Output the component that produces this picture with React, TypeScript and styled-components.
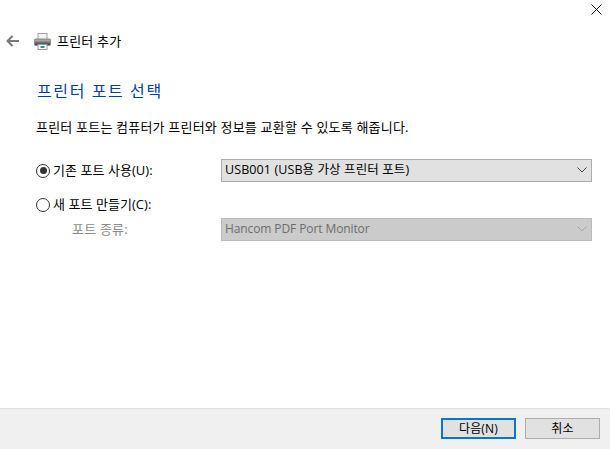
import React from "react";
import styled, { createGlobalStyle } from "styled-components";

const Global = createGlobalStyle`
  html, body {
    margin: 0;
    padding: 0;
    background: #fff;
    overflow: hidden;
  }
  body {
    font-family: "Open Sans", "Noto Sans CJK KR", sans-serif;
    font-size: 13px;
    letter-spacing: 0.2px;
    color: #000;
  }
`;

const Window = styled.div`
  width: 610px;
  height: 449px;
  display: flex;
  flex-direction: column;
`;

const TitleBar = styled.div`
  height: 21px;
  display: flex;
  justify-content: flex-end;
  padding: 4px 8px 0 0;
  box-sizing: border-box;
`;

const CloseButton = styled.div`
  width: 11px;
  height: 11px;
  display: flex;
`;

const NavBar = styled.div`
  height: 40px;
  display: flex;
  align-items: center;
  padding-left: 6px;
`;

const BackIcon = styled.div`
  width: 14px;
  height: 12px;
  display: flex;
  margin-right: 14px;
`;

const PrinterIcon = styled.div`
  width: 17px;
  height: 17px;
  display: flex;
  margin-right: 6px;
`;

const NavTitle = styled.span`
  line-height: 16px;
`;

const Content = styled.div`
  flex: 1;
  padding: 19px 18px 0 36px;
`;

const Heading = styled.h1`
  margin: 0 0 17px 1px;
  font-size: 16px;
  letter-spacing: 1.6px;
  line-height: 22px;
  font-weight: 400;
  color: #0040a8;
`;

const Description = styled.p`
  margin: 0 0 24px;
  line-height: 16px;
`;

const FormGrid = styled.div`
  display: grid;
  grid-template-columns: 185px 371px;
  grid-template-rows: 34px 25px 23px;
  align-items: start;
`;

const RadioLabel = styled.label`
  display: flex;
  align-items: center;
  height: 23px;
  gap: 3px;
  line-height: 14px;
  letter-spacing: 0.05px;
`;

const RadioCircle = styled.span<{ $checked?: boolean }>`
  flex: none;
  width: 14px;
  height: 14px;
  box-sizing: border-box;
  border: 1px solid #333;
  border-radius: 50%;
  background: #fff;
  display: flex;
  align-items: center;
  justify-content: center;

  &::after {
    content: "";
    width: 7px;
    height: 7px;
    border-radius: 50%;
    background: ${(p) => (p.$checked ? "#333" : "transparent")};
  }
`;

const LabelText = styled.span`
  padding-bottom: 2px;
`;

const SubLabel = styled.span`
  display: flex;
  align-items: center;
  height: 21px;
  padding-left: 36px;
  color: #8a8a8a;
  line-height: 16px;
`;

const Select = styled.div<{ $disabled?: boolean }>`
  height: 23px;
  box-sizing: border-box;
  display: flex;
  align-items: center;
  justify-content: space-between;
  padding: 0 4px 1px 3px;
  border: 1px solid ${(p) => (p.$disabled ? "#bbb" : "#adadad")};
  background: ${(p) => (p.$disabled ? "#cbcbcb" : "#e1e1e1")};
  color: ${(p) => (p.$disabled ? "#6d6d6d" : "#000")};
  font-size: ${(p) => (p.$disabled ? "12px" : "12.5px")};
  letter-spacing: ${(p) => (p.$disabled ? "-0.1px" : "0.1px")};
  line-height: 16px;
`;

const Chevron = styled.svg`
  width: 10px;
  height: 6px;
`;

const Footer = styled.div`
  height: 41px;
  box-sizing: border-box;
  border-top: 1px solid #dfdfdf;
  background: #f0f0f0;
  display: flex;
  justify-content: flex-end;
  gap: 9px;
  padding: 9px 10px 0 0;
`;

const Button = styled.div<{ $primary?: boolean }>`
  width: 75px;
  height: 21px;
  box-sizing: border-box;
  display: flex;
  align-items: center;
  justify-content: center;
  background: #e1e1e1;
  border: ${(p) => (p.$primary ? "2px solid #0078d7" : "1px solid #adadad")};
  font-size: 12px;
  line-height: 16px;
`;

const ChevronIcon = ({ color }: { color: string }) => (
  <Chevron viewBox="0 0 10 6">
    <path d="M0.5 0.5 L5 5 L9.5 0.5" fill="none" stroke={color} strokeWidth="1" />
  </Chevron>
);

export default function App() {
  return (
    <>
      <Global />
      <Window>
        <TitleBar>
          <CloseButton>
            <svg width="11" height="11" viewBox="0 0 11 11">
              <path d="M0.5 0.5 L10.5 10.5 M10.5 0.5 L0.5 10.5" stroke="#111" strokeWidth="1" />
            </svg>
          </CloseButton>
        </TitleBar>
        <NavBar>
          <BackIcon>
            <svg width="14" height="12" viewBox="0 0 14 12">
              <path d="M13 6 H2 M6.5 1 L1.5 6 L6.5 11" fill="none" stroke="#7a7a7a" strokeWidth="2" />
            </svg>
          </BackIcon>
          <PrinterIcon>
            <svg width="17" height="17" viewBox="0 0 17 17">
              <rect x="4" y="0.5" width="9" height="6" fill="#f4f4f4" stroke="#a0a0a0" />
              <rect x="0.5" y="6" width="16" height="6.5" rx="1" fill="#6f6f6f" stroke="#8d8d8d" />
              <rect x="1" y="6.5" width="15" height="2" fill="#a5a5a5" />
              <rect x="1" y="10.5" width="15" height="1.5" fill="#4a4a4a" />
              <rect x="4" y="11.5" width="9" height="5" fill="#fff" stroke="#9a9a9a" />
              <rect x="6.5" y="13" width="4" height="2" fill="#2f8f9a" />
            </svg>
          </PrinterIcon>
          <NavTitle>프린터 추가</NavTitle>
        </NavBar>
        <Content>
          <Heading>프린터 포트 선택</Heading>
          <Description>프린터 포트는 컴퓨터가 프린터와 정보를 교환할 수 있도록 해줍니다.</Description>
          <FormGrid>
            <RadioLabel>
              <RadioCircle $checked />
              <LabelText>기존 포트 사용(U):</LabelText>
            </RadioLabel>
            <Select>
              USB001 (USB용 가상 프린터 포트)
              <ChevronIcon color="#444" />
            </Select>
            <RadioLabel>
              <RadioCircle />
              <LabelText>새 포트 만들기(C):</LabelText>
            </RadioLabel>
            <span />
            <SubLabel>포트 종류:</SubLabel>
            <Select $disabled>
              Hancom PDF Port Monitor
              <ChevronIcon color="#a8a8a8" />
            </Select>
          </FormGrid>
        </Content>
        <Footer>
          <Button $primary>다음(N)</Button>
          <Button>취소</Button>
        </Footer>
      </Window>
    </>
  );
}
